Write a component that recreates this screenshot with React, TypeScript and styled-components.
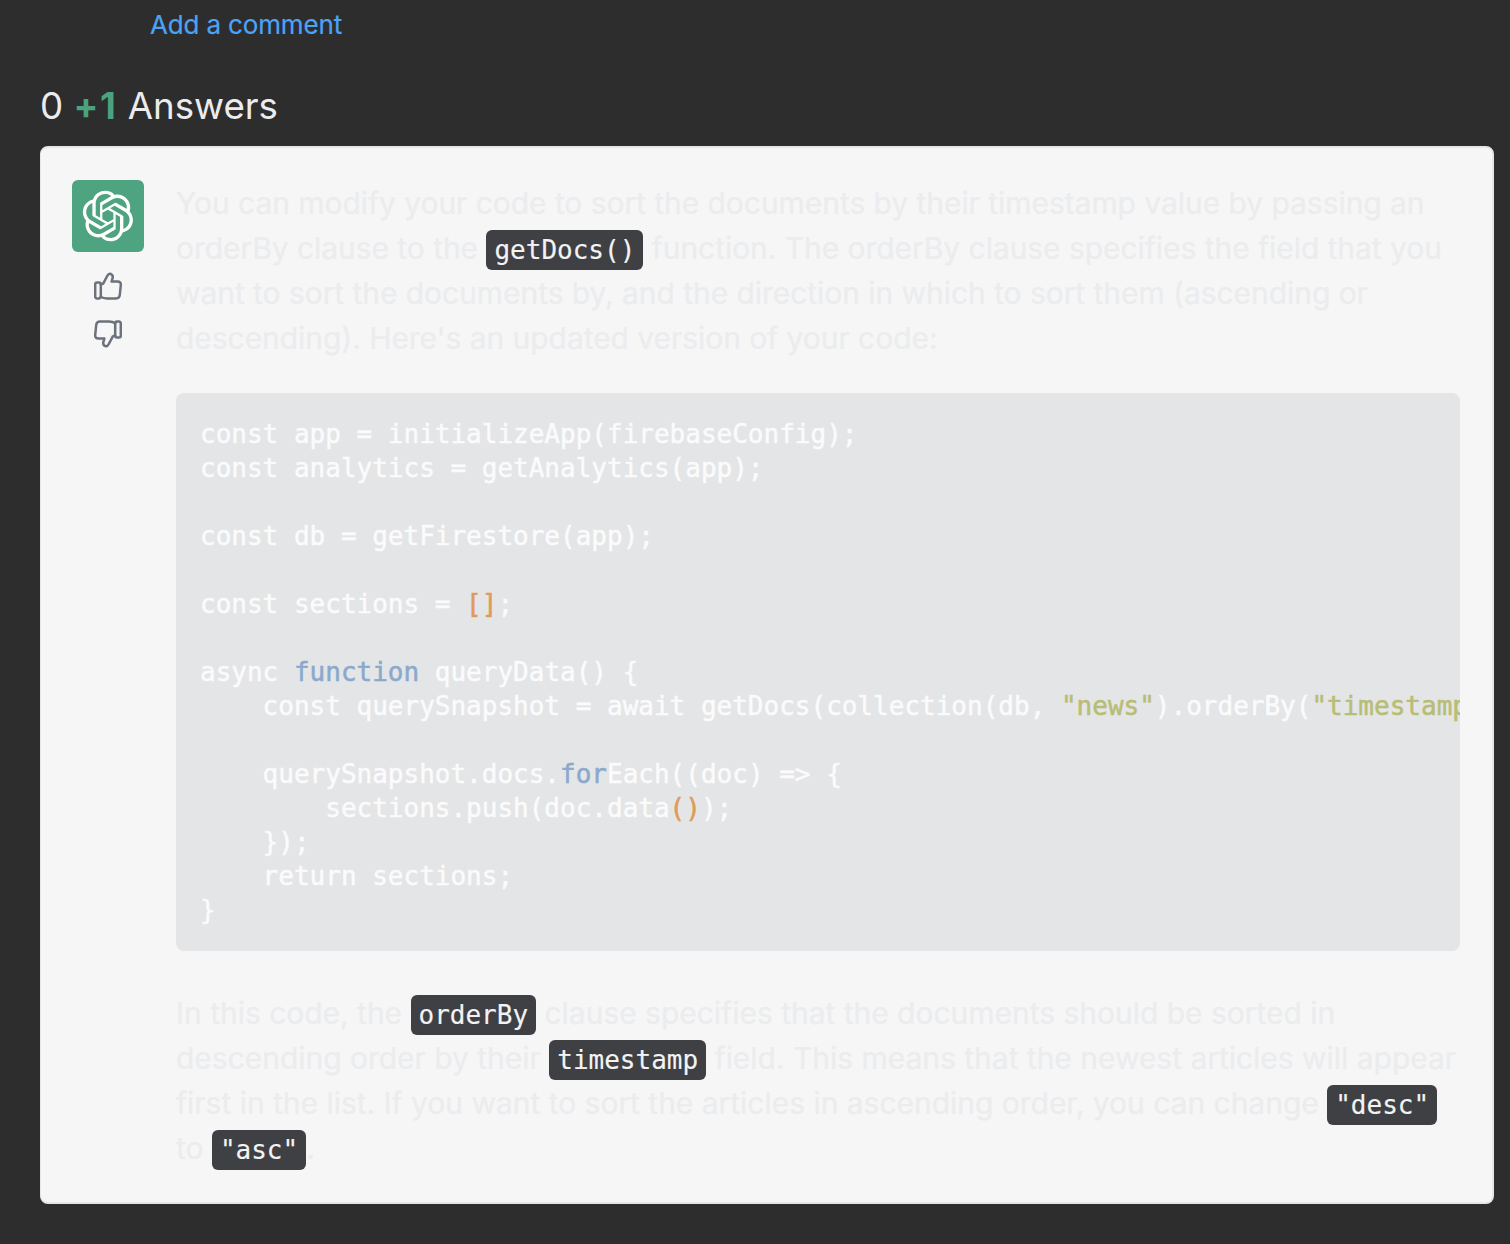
import React from "react";
import styled, { createGlobalStyle } from "styled-components";

const Global = createGlobalStyle`
  html, body { margin: 0; padding: 0; background: #2d2d2d; }
  body { font-family: Inter, "Liberation Sans", sans-serif; }
`;

const Page = styled.main`
  width: 1510px;
  height: 1244px;
  box-sizing: border-box;
  padding: 0 16px 0 40px;
  overflow: hidden;
  background: #2d2d2d;
`;

const CommentLink = styled.a`
  display: block;
  margin-left: 110px;
  height: 50px;
  font-size: 26px;
  line-height: 50px;
  letter-spacing: -0.15px;
  color: #4ba3f7;
  -webkit-text-stroke: 0.2px #4ba3f7;
`;

const Heading = styled.h2`
  margin: 31px 0 15px;
  font-size: 36.7px;
  line-height: 50px;
  font-weight: 400;
  color: #ececee;
`;

const PlusOne = styled.span`
  color: #4ca27f;
  font-weight: 700;
  letter-spacing: 1.6px;
`;

const Card = styled.article`
  display: flex;
  gap: 32px;
  box-sizing: border-box;
  height: 1058px;
  padding: 32px 32px 32px 31px;
  border: 2px solid #e5e6e8;
  border-left-width: 1px;
  border-radius: 8px;
  background: #f6f6f6;
`;

const Rail = styled.aside`
  flex: 0 0 72px;
  display: flex;
  flex-direction: column;
  align-items: center;
`;

const Avatar = styled.div`
  display: flex;
  align-items: center;
  justify-content: center;
  width: 72px;
  height: 72px;
  border-radius: 6px;
  background: #4ea380;
`;

const Vote = styled.button<{ $gap: number }>`
  display: block;
  width: 28px;
  height: 28px;
  margin-top: ${(p) => p.$gap}px;
  padding: 0;
  border: 0;
  background: none;
`;

const Body = styled.div`
  flex: 1;
  min-width: 0;
  padding-top: 1px;
`;

const Para = styled.p<{ $spacing: number }>`
  margin: 0;
  font-size: 30px;
  line-height: 45px;
  letter-spacing: ${(p) => p.$spacing}px;
  color: #ebecee;
  -webkit-text-stroke: 0.2px #ebecee;
`;

const Chip = styled.code`
  display: inline-block;
  height: 40px;
  margin: -4px 0;
  padding: 0 8px;
  border-radius: 6px;
  background: #3f4044;
  color: #f3f3f4;
  font-family: "DejaVu Sans Mono", monospace;
  font-size: 26px;
  line-height: 40px;
  letter-spacing: 0;
  vertical-align: 0;
  -webkit-text-stroke: 0.15px #f3f3f4;
`;

const CodeBlock = styled.pre`
  margin: 32px 0 40px;
  padding: 24px;
  overflow: hidden;
  border-radius: 8px;
  background: #e4e5e7;
  color: #fbfbfb;
  font-family: "DejaVu Sans Mono", monospace;
  font-size: 26px;
  line-height: 34px;
  -webkit-text-stroke: 0.5px currentColor;
`;

const Token = styled.span<{ $kind: "orange" | "blue" | "olive" }>`
  color: ${(p) => ({ orange: "#e19a57", blue: "#8aa9cc", olive: "#b8bd74" })[p.$kind]};
`;

const OpenAILogo = () => (
  <svg width="52" height="52" viewBox="0 0 41 41" fill="none">
    <path
      fill="#fff"
      d="M37.5324 16.8707C37.9808 15.5241 38.1363 14.0974 37.9886 12.6859C37.8409 11.2744 37.3934 9.91076 36.676 8.68622C35.6126 6.83404 33.9882 5.3676 32.0373 4.4985C30.0864 3.62941 27.9098 3.40259 25.8215 3.85078C24.8796 2.7893 23.7219 1.94125 22.4257 1.36341C21.1295 0.785575 19.7249 0.491269 18.3058 0.500197C16.1708 0.495044 14.0893 1.16803 12.3614 2.42214C10.6335 3.67624 9.34853 5.44666 8.6917 7.47815C7.30085 7.76286 5.98686 8.3414 4.8377 9.17505C3.68854 10.0087 2.73073 11.0782 2.02839 12.312C0.956464 14.1591 0.498905 16.2988 0.721698 18.4228C0.944492 20.5467 1.83612 22.5449 3.268 24.1293C2.81966 25.4759 2.66413 26.9026 2.81182 28.3141C2.95951 29.7256 3.40701 31.0892 4.12437 32.3138C5.18791 34.1659 6.8123 35.6322 8.76321 36.5013C10.7141 37.3704 12.8907 37.5973 14.9789 37.1492C15.9208 38.2107 17.0786 39.0587 18.3747 39.6366C19.6709 40.2144 21.0755 40.5087 22.4946 40.4998C24.6307 40.5054 26.7133 39.8321 28.4418 38.5772C30.1704 37.3223 31.4556 35.5506 32.1119 33.5179C33.5027 33.2332 34.8167 32.6547 35.9659 31.821C37.115 30.9874 38.0728 29.9178 38.7752 28.684C39.8458 26.8371 40.3023 24.6979 40.0789 22.5748C39.8556 20.4517 38.9639 18.4544 37.5324 16.8707ZM22.4978 37.8849C20.7443 37.8874 19.0459 37.2733 17.6994 36.1501C17.7601 36.117 17.8666 36.0586 17.936 36.0161L25.9004 31.4156C26.1003 31.3019 26.2663 31.137 26.3813 30.9378C26.4964 30.7386 26.5563 30.5124 26.5549 30.2825V19.0542L29.9213 20.998C29.9389 21.0068 29.9541 21.0198 29.9656 21.0359C29.977 21.052 29.9842 21.0707 29.9867 21.0902V30.3889C29.9842 32.375 29.1946 34.2791 27.7909 35.6841C26.3872 37.0892 24.4838 37.8806 22.4978 37.8849ZM6.39227 31.0064C5.51397 29.4888 5.19742 27.7107 5.49804 25.9832C5.55718 26.0187 5.66048 26.0818 5.73461 26.1244L13.699 30.7248C13.8975 30.8408 14.1233 30.902 14.3532 30.902C14.583 30.902 14.8088 30.8408 15.0073 30.7248L24.731 25.1103V28.9979C24.7321 29.0177 24.7283 29.0376 24.7199 29.0556C24.7115 29.0736 24.6988 29.0893 24.6829 29.1012L16.6317 33.7497C14.9096 34.7416 12.8643 35.0097 10.9447 34.4954C9.02506 33.9811 7.38785 32.7263 6.39227 31.0064ZM4.29707 13.6194C5.17156 12.0998 6.55279 10.9364 8.19885 10.3327C8.19885 10.4013 8.19491 10.5228 8.19491 10.6071V19.808C8.19351 20.0378 8.25334 20.2638 8.36823 20.4629C8.48312 20.6619 8.64893 20.8267 8.84863 20.9404L18.5723 26.5542L15.206 28.4979C15.1894 28.5089 15.1703 28.5155 15.1505 28.5173C15.1307 28.5191 15.1107 28.516 15.0924 28.5082L7.04046 23.8557C5.32135 22.8601 4.06716 21.2235 3.55289 19.3046C3.03862 17.3858 3.30624 15.3413 4.29707 13.6194ZM31.955 20.0556L22.2312 14.4411L25.5976 12.4981C25.6142 12.4872 25.6333 12.4805 25.6531 12.4787C25.6729 12.4769 25.6928 12.4801 25.7111 12.4879L33.7631 17.1364C34.9967 17.849 36.0017 18.8982 36.6606 20.1613C37.3194 21.4244 37.6047 22.849 37.4832 24.2684C37.3617 25.6878 36.8382 27.0432 35.9743 28.1759C35.1103 29.3086 33.9415 30.1717 32.6047 30.6641C32.6047 30.5947 32.6047 30.4733 32.6047 30.3889V21.188C32.6066 20.9586 32.5474 20.7328 32.4332 20.5338C32.319 20.3348 32.154 20.1698 31.955 20.0556ZM35.3055 15.0128C35.2464 14.9765 35.1431 14.9142 35.069 14.8717L27.1045 10.2712C26.906 10.1554 26.6803 10.0943 26.4504 10.0943C26.2206 10.0943 25.9948 10.1554 25.7963 10.2712L16.0726 15.8858V11.9982C16.0715 11.9783 16.0753 11.9585 16.0837 11.9405C16.0921 11.9225 16.1048 11.9068 16.1207 11.8949L24.1719 7.25025C25.4053 6.53903 26.8121 6.19376 28.2278 6.25482C29.6436 6.31589 31.0098 6.78077 32.1674 7.59508C33.3251 8.40939 34.2266 9.53945 34.7664 10.8531C35.3062 12.1667 35.4605 13.6095 35.2111 15.0117L35.3055 15.0128ZM14.2424 21.9419L10.8752 19.9981C10.8576 19.9893 10.8423 19.9763 10.8309 19.9602C10.8195 19.9441 10.8122 19.9254 10.8098 19.9058V10.6071C10.8107 9.18295 11.2173 7.78848 11.9819 6.58696C12.7466 5.38544 13.8377 4.42659 15.1275 3.82264C16.4173 3.21869 17.8524 2.99464 19.2649 3.1767C20.6775 3.35876 22.0089 3.93941 23.1034 4.85067C23.0427 4.88379 22.937 4.94215 22.8668 4.98473L14.9024 9.58517C14.7025 9.69878 14.5366 9.86356 14.4215 10.0626C14.3065 10.2616 14.2466 10.4877 14.2479 10.7175L14.2424 21.9419ZM16.071 17.9991L20.4018 15.4978L24.7325 17.9975V22.9985L20.4018 25.4983L16.071 22.9985V17.9991Z"
    />
  </svg>
);

const ThumbIcon = ({ down }: { down?: boolean }) => (
  <svg width="28" height="28" viewBox="0 0 28 28" fill="none" stroke="#6b727b" strokeWidth="2.5" strokeLinejoin="round" strokeLinecap="round" transform={down ? "rotate(180)" : undefined}>
    <rect x="1.2" y="10.4" width="5.6" height="16" rx="1.8" />
    <path d="M6.8 12.6 L9.2 11.6 L13.2 4 Q14.6 1.2 16.6 1.8 Q19.4 3 18.6 6.2 L17.6 9.6 L23.6 9.6 Q27 9.6 26.8 13 L25.8 23 Q25.4 26.4 22 26.4 L13 26.4 Q9 26.4 6.8 24.6" />
  </svg>
);

const App = () => (
  <>
    <Global />
    <Page>
      <CommentLink>Add a comment</CommentLink>
      <Heading>
        0 <PlusOne>+1</PlusOne> Answers
      </Heading>
      <Card>
        <Rail>
          <Avatar>
            <OpenAILogo />
          </Avatar>
          <Vote $gap={20}>
            <ThumbIcon />
          </Vote>
          <Vote $gap={20}>
            <ThumbIcon down />
          </Vote>
        </Rail>
        <Body>
          <Para $spacing={-0.05}>
            You can modify your code to sort the documents by their timestamp value by passing an orderBy clause to the <Chip>getDocs()</Chip> function. The orderBy clause specifies the field that you want to sort the documents by, and the direction in which to sort them (ascending or descending). Here's an updated version of your code:
          </Para>
          <CodeBlock>
            {`const app = initializeApp(firebaseConfig);
const analytics = getAnalytics(app);

const db = getFirestore(app);

const sections = `}<Token $kind="orange">[]</Token>{`;

async `}<Token $kind="blue">function</Token>{` queryData() {
    const querySnapshot = await getDocs(collection(db, `}<Token $kind="olive">"news"</Token>{`).orderBy(`}<Token $kind="olive">"timestamp", "desc"</Token>{`));

    querySnapshot.docs.`}<Token $kind="blue">for</Token>{`Each((doc) => {
        sections.push(doc.data`}<Token $kind="orange">()</Token>{`);
    });
    return sections;
}`}
          </CodeBlock>
          <Para $spacing={-0.02}>
            In this code, the <Chip>orderBy</Chip> clause specifies that the documents should be sorted in descending order by their <Chip>timestamp</Chip> field. This means that the newest articles will appear first in the list. If you want to sort the articles in ascending order, you can change <Chip>"desc"</Chip> to <Chip>"asc"</Chip>.
          </Para>
        </Body>
      </Card>
    </Page>
  </>
);

export default App;
